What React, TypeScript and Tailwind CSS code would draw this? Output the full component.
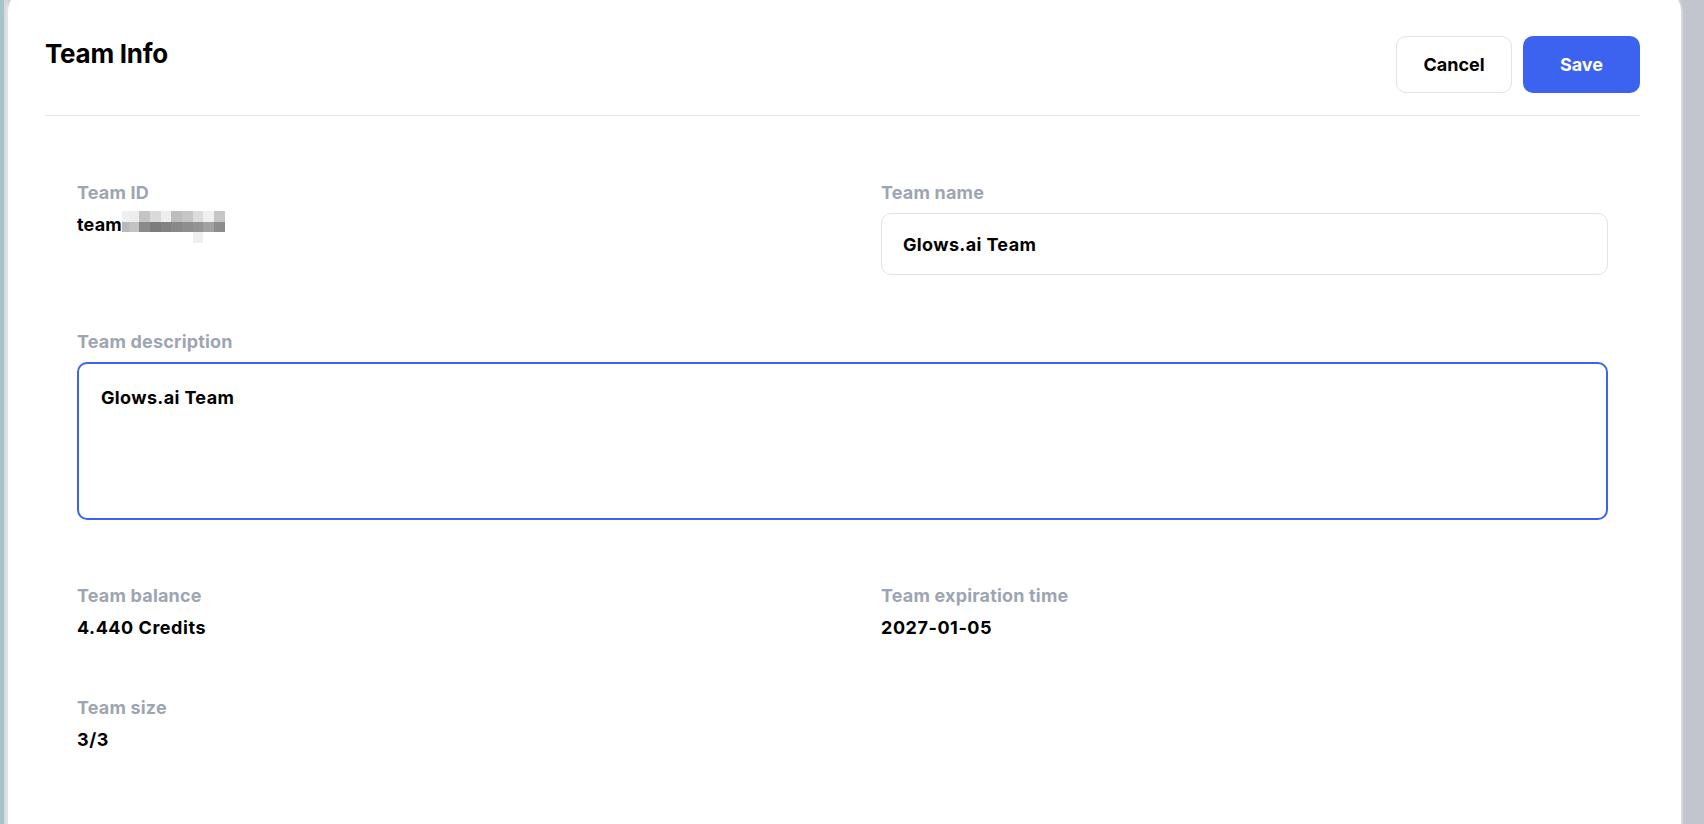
import React from "react";

// pixelated cover over the rest of the team id
const MOSAIC_TOP = ["#efefef", "#ededed", "#c4c4c4", "#d8dadc", "#eeeeee", "#bdbdbd", "#c6c6c6", "#dadcde", "#f0f0f0", "#c6c6c6"];
const MOSAIC_MID = ["#b8b8b8", "#c2c2c2", "#8a8a8a", "#7c7c7c", "#828282", "#888888", "#8e8e8e", "#939393", "#a1a1a1", "#8c8c8c"];
const MOSAIC_LOW = ["transparent", "transparent", "transparent", "transparent", "transparent", "transparent", "transparent", "#efefef", "transparent", "transparent"];

const MosaicRow: React.FC<{ colors: string[] }> = ({ colors }) => (
  <div className="flex h-[10.7px]">
    {colors.map((c, i) => (
      <div
        key={i}
        className={i === 0 ? "h-full w-[6.7px]" : "h-full w-[10.7px]"}
        style={{ backgroundColor: c }}
      />
    ))}
  </div>
);

const Field: React.FC<{ label: string; className?: string; children: React.ReactNode }> = ({
  label,
  className = "",
  children,
}) => (
  <div className={className}>
    <div className="text-[18px] leading-6 font-bold tracking-[0.01em] text-[#9ea5b2]">{label}</div>
    <div className="mt-2">{children}</div>
  </div>
);

const Value: React.FC<{ children: React.ReactNode }> = ({ children }) => (
  <div className="text-[18px] leading-6 font-bold tracking-[0.03em] text-black">{children}</div>
);

const App: React.FC = () => {
  return (
    <div className="flex h-screen overflow-hidden bg-[#c3c5ce] font-['Inter',sans-serif]">
      <div className="w-[4px] shrink-0 bg-[#a7c4cb]" />
      <div className="w-[4px] shrink-0 bg-[#d8d9d9]" />

      <div className="-mt-3 flex-1 rounded-t-[24px] bg-white pt-12 pl-[37px] pr-[41px] shadow-[0_0_3px_1px_rgba(236,238,246,0.9)]">
        {/* header */}
        <div className="flex items-start justify-between">
          <h1 className="mt-[2px] text-[26px] leading-8 font-bold tracking-[-0.01em] text-black">Team Info</h1>
          <div className="flex gap-[11px]">
            <button className="h-[57px] w-[116px] rounded-[10px] border border-[#e2e3e6] bg-white text-[18px] font-bold text-black">
              Cancel
            </button>
            <button className="h-[57px] w-[117px] rounded-[10px] bg-[#3b63ef] text-[18px] font-bold text-white">
              Save
            </button>
          </div>
        </div>
        <div className="mt-[22px] border-t border-[#e5e6e9]" />

        {/* form */}
        <div className="grid grid-cols-2 gap-x-[77px] px-8 pt-[65px]">
          <Field label="Team ID">
            <div className="flex items-start">
              <div className="text-[18px] leading-6 font-bold tracking-[0.01em] text-black">team</div>
              <div className="-mt-[2px] flex flex-col">
                <MosaicRow colors={MOSAIC_TOP} />
                <MosaicRow colors={MOSAIC_MID} />
                <MosaicRow colors={MOSAIC_LOW} />
              </div>
            </div>
          </Field>

          <Field label="Team name">
            <input
              defaultValue="Glows.ai Team"
              className="h-[62px] w-full rounded-[10px] border border-[#e2e3e6] px-[21px] text-[18px] font-bold tracking-[0.02em] text-black outline-none"
            />
          </Field>

          <Field label="Team description" className="col-span-2 mt-[55px]">
            <textarea
              defaultValue="Glows.ai Team"
              className="block h-[158px] w-full resize-none rounded-[10px] border-2 border-[#3b63ef] px-[22px] pt-[22px] text-[18px] leading-6 font-bold tracking-[0.02em] text-black outline-none"
            />
          </Field>

          <Field label="Team balance" className="mt-[64px]">
            <Value>4.440 Credits</Value>
          </Field>
          <Field label="Team expiration time" className="mt-[64px]">
            <Value>2027-01-05</Value>
          </Field>

          <Field label="Team size" className="mt-[56px]">
            <Value>3/3</Value>
          </Field>
        </div>
      </div>

      <div className="w-[23px] shrink-0" />
    </div>
  );
};

export default App;
